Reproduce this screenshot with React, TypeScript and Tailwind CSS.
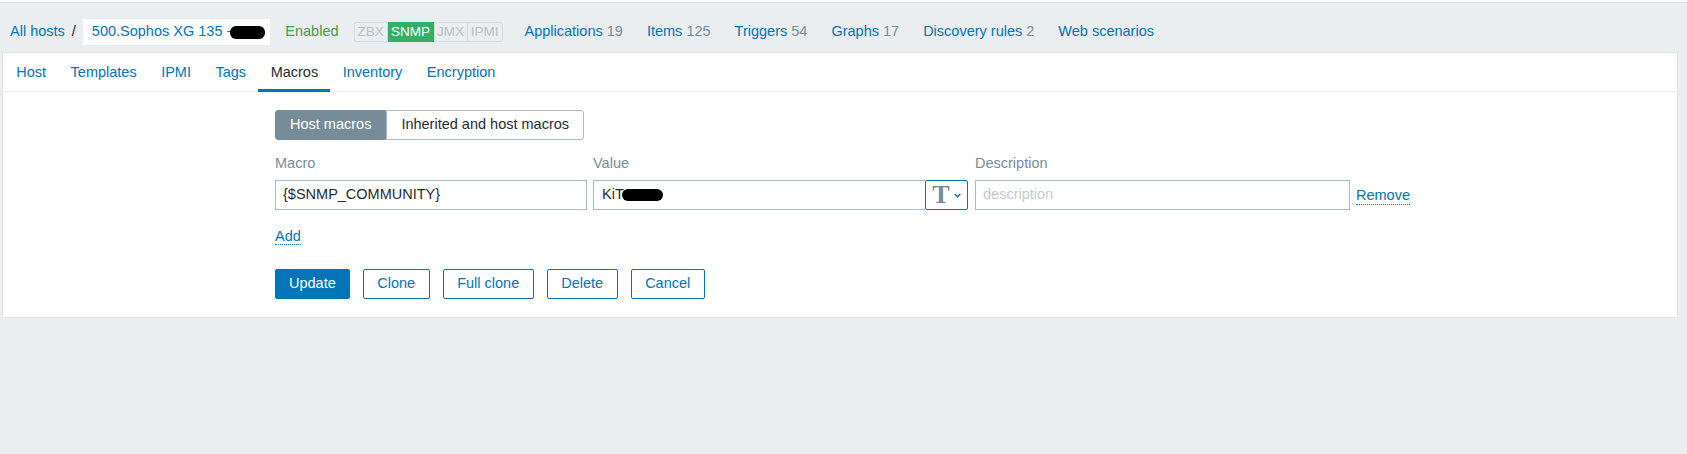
import { useState } from 'react'

const hostLinks = [
  { label: 'Applications', count: 19 },
  { label: 'Items', count: 125 },
  { label: 'Triggers', count: 54 },
  { label: 'Graphs', count: 17 },
  { label: 'Discovery rules', count: 2 },
  { label: 'Web scenarios' },
]

const interfaces = [
  { name: 'ZBX', on: false, w: 'w-[34px] rounded-l-[2px]' },
  { name: 'SNMP', on: true, w: 'w-[46px]' },
  { name: 'JMX', on: false, w: 'w-[34px]' },
  { name: 'IPMI', on: false, w: 'w-[35px] rounded-r-[2px] border-l-0' },
]

const tabs = ['Host', 'Templates', 'IPMI', 'Tags', 'Macros', 'Inventory', 'Encryption']

function Redacted({ className }: { className: string }) {
  return <span className={`inline-block bg-black rounded-[6px] align-middle ${className}`} />
}

function HostHeader() {
  return (
    <div className="flex items-center h-[26px] mt-[16px] mb-[7px] pl-[10px] text-[14.5px]">
      <a className="text-[#0275b8]">All hosts</a>
      <span className="mx-[7px] text-[#1f2c33]">/</span>
      <div className="h-full flex items-center bg-white pl-[9px] pr-[5px] text-[#0275b8]">
        500.Sophos XG 135 -
        <Redacted className="w-[35px] h-[13px] -ml-[1px]" />
      </div>
      <span className="ml-[15px] text-[#429e47]">Enabled</span>
      <div className="ml-[15px] flex h-[20px] text-[13.5px] leading-none">
        {interfaces.map((i) => (
          <span
            key={i.name}
            className={`flex items-center justify-center border ${i.w} ${
              i.on ? 'bg-[#34af67] border-[#34af67] text-white' : 'border-[#d5dadd] text-[#b7c1c7]'
            }`}
          >
            {i.name}
          </span>
        ))}
      </div>
      <nav className="ml-[22px] flex gap-[24px]">
        {hostLinks.map((l) => (
          <a key={l.label} className="text-[#0275b8] whitespace-nowrap">
            {l.label}
            {l.count !== undefined && <span className="text-[#768d99]"> {l.count}</span>}
          </a>
        ))}
      </nav>
    </div>
  )
}

function TypeToggle() {
  return (
    <button className="w-[43px] h-full flex items-center justify-center gap-[4px] border border-[#0275b8] rounded-[2px] bg-white">
      <span className="text-[#768d99] text-[26px] font-bold leading-none" style={{ fontFamily: '"Liberation Serif", serif' }}>
        T
      </span>
      <svg width="7" height="5" viewBox="0 0 7 5" className="mt-[1px]">
        <path d="M0.8 1 L3.5 3.7 L6.2 1" fill="none" stroke="#0275b8" strokeWidth="1.6" />
      </svg>
    </button>
  )
}

function MacrosForm() {
  const [mode, setMode] = useState<'host' | 'inherited'>('host')

  return (
    <div className="pl-[272px] pt-[18px] pb-[18px] text-[14.5px]">
      <div className="flex h-[30px]">
        <button
          onClick={() => setMode('host')}
          className={`px-[14px] rounded-l-[3px] border ${
            mode === 'host' ? 'bg-[#768d99] border-[#768d99] text-white' : 'bg-white border-[#acbbc2] text-[#1f2c33]'
          }`}
        >
          Host macros
        </button>
        <button
          onClick={() => setMode('inherited')}
          className={`px-[14px] rounded-r-[3px] border ${
            mode === 'inherited' ? 'bg-[#768d99] border-[#768d99] text-white' : 'bg-white border-[#acbbc2] text-[#1f2c33]'
          }`}
        >
          Inherited and host macros
        </button>
      </div>

      <div className="flex mt-[14px] h-[18px] leading-[18px] text-[#768d99]">
        <div className="w-[318px]">Macro</div>
        <div className="w-[382px]">Value</div>
        <div>Description</div>
      </div>

      <div className="flex items-center mt-[8px] h-[30px]">
        <div className="w-[312px] h-full flex items-center border border-[#acbbc2] pl-[7px] text-[#1f2c33]">
          {'{$SNMP_COMMUNITY}'}
        </div>
        <div className="ml-[6px] flex h-full">
          <div className="w-[332px] h-full flex items-center border border-[#acbbc2] border-r-0 pl-[8px] text-[#1f2c33]">
            KiT
            <Redacted className="w-[41px] h-[12px] -ml-[2px]" />
          </div>
          <TypeToggle />
        </div>
        <div className="ml-[7px] w-[375px] h-full flex items-center border border-[#acbbc2] pl-[7px] text-[#c3ccd1]">
          description
        </div>
        <a className="ml-[6px] mt-[1px] text-[#0275b8] border-b border-dotted border-[#0275b8] leading-[17px]">Remove</a>
      </div>

      <div className="mt-[16px] h-[19px]">
        <a className="leading-[17px] text-[#0275b8] border-b border-dotted border-[#0275b8]">Add</a>
      </div>

      <div className="flex gap-[13px] mt-[24px] h-[30px]">
        <button className="px-[13px] rounded-[2px] bg-[#0275b8] border border-[#0275b8] text-white">Update</button>
        {['Clone', 'Full clone', 'Delete', 'Cancel'].map((b) => (
          <button key={b} className="px-[13.5px] rounded-[2px] bg-white border border-[#0275b8] text-[#0275b8]">
            {b}
          </button>
        ))}
      </div>
    </div>
  )
}

export default function App() {
  const [active, setActive] = useState('Macros')

  return (
    <div className="w-full h-[454px] bg-[#ebeef0]" style={{ fontFamily: '"Liberation Sans", Arial, sans-serif' }}>
      <div className="h-[3px] bg-white border-b border-[#dfe4e7]" />
      <HostHeader />

      <div className="ml-[2px] w-[1676px] bg-white border border-[#dfe4e7]">
        <div className="flex h-[39px] pl-[1px] border-b border-[#ebeef0] text-[14.5px]">
          {tabs.map((t) => (
            <button
              key={t}
              onClick={() => setActive(t)}
              className={`relative h-full pt-[2px] px-[12.25px] ${t === active ? 'text-[#1f2c33]' : 'text-[#0275b8]'}`}
            >
              {t}
              {t === active && <span className="absolute left-0 right-0 bottom-[-1px] h-[3px] bg-[#0275b8]" />}
            </button>
          ))}
        </div>
        <MacrosForm />
      </div>
    </div>
  )
}
